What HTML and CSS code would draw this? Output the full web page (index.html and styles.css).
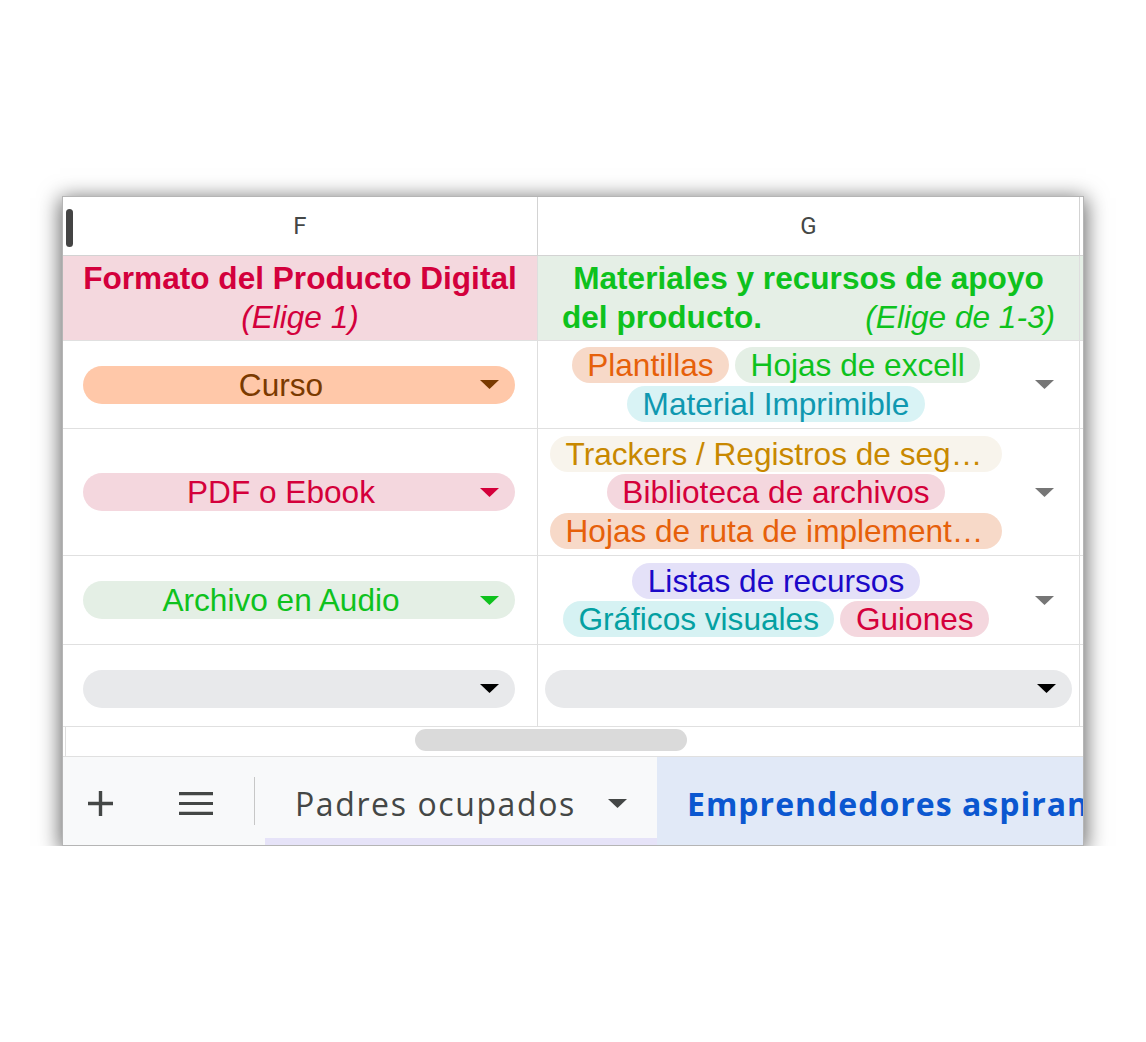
FILE: index.html
```html
<!DOCTYPE html>
<html lang="es">
	<head>
		<meta charset="utf-8"/>
		<title>Hoja de cálculo</title>
		<link rel="stylesheet" href="styles.css">
	</head>
	<body>
		<div class="page">
			<div class="sheet">
				<div class="grid">
					<!-- column letters -->
					<div class="head col-f"><span class="freeze"></span>F</div>
					<div class="head col-g">G</div>
					<div class="head col-h"></div>

					<!-- titles -->
					<div class="cell col-f title title-f">
						<div>Formato del Producto Digital</div>
						<div class="hint">(Elige 1)</div>
					</div>
					<div class="cell col-g title title-g">
						<div>Materiales y recursos de apoyo</div>
						<div class="title-line"><span>del producto.</span><span class="hint">(Elige de 1-3)</span></div>
					</div>
					<div class="cell col-h title-g"></div>

					<!-- row 1 -->
					<div class="cell col-f drop-cell">
						<div class="drop curso"><span class="drop-label">Curso</span><svg class="arrow" width="19" height="9" viewBox="0 0 19 9"><path d="M0 0H19L9.5 9Z"/></svg></div>
					</div>
					<div class="cell col-g chips-cell">
						<div class="chips">
							<span class="chip orange">Plantillas</span>
							<span class="chip green">Hojas de excell</span>
							<span class="chip cyan">Material Imprimible</span>
						</div>
						<svg class="arrow gray" width="19" height="9" viewBox="0 0 19 9"><path d="M0 0H19L9.5 9Z"/></svg>
					</div>
					<div class="cell col-h"></div>

					<!-- row 2 -->
					<div class="cell col-f drop-cell">
						<div class="drop pdf"><span class="drop-label">PDF o Ebook</span><svg class="arrow" width="19" height="9" viewBox="0 0 19 9"><path d="M0 0H19L9.5 9Z"/></svg></div>
					</div>
					<div class="cell col-g chips-cell">
						<div class="chips">
							<span class="chip gold">Trackers / Registros de seguimiento</span>
							<span class="chip red">Biblioteca de archivos</span>
							<span class="chip orange">Hojas de ruta de implementación</span>
						</div>
						<svg class="arrow gray" width="19" height="9" viewBox="0 0 19 9"><path d="M0 0H19L9.5 9Z"/></svg>
					</div>
					<div class="cell col-h"></div>

					<!-- row 3 -->
					<div class="cell col-f drop-cell">
						<div class="drop audio"><span class="drop-label">Archivo en Audio</span><svg class="arrow" width="19" height="9" viewBox="0 0 19 9"><path d="M0 0H19L9.5 9Z"/></svg></div>
					</div>
					<div class="cell col-g chips-cell">
						<div class="chips">
							<span class="chip violet">Listas de recursos</span>
							<span class="chip teal">Gráficos visuales</span>
							<span class="chip red">Guiones</span>
						</div>
						<svg class="arrow gray" width="19" height="9" viewBox="0 0 19 9"><path d="M0 0H19L9.5 9Z"/></svg>
					</div>
					<div class="cell col-h"></div>

					<!-- row 4, empty -->
					<div class="cell col-f drop-cell empty-row">
						<div class="drop empty"><span class="drop-label"></span><svg class="arrow" width="19" height="9" viewBox="0 0 19 9"><path d="M0 0H19L9.5 9Z"/></svg></div>
					</div>
					<div class="cell col-g drop-cell-wide empty-row">
						<div class="drop empty"><span class="drop-label"></span><svg class="arrow" width="19" height="9" viewBox="0 0 19 9"><path d="M0 0H19L9.5 9Z"/></svg></div>
					</div>
					<div class="cell col-h"></div>
				</div>

				<div class="scrollbar">
					<span class="scroll-edge"></span>
					<span class="thumb"></span>
				</div>

				<div class="tabs">
					<svg class="tab-icon plus" width="25" height="25" viewBox="0 0 25 25"><path d="M12.5 0V25M0 12.5H25" stroke="#444746" stroke-width="3.4"/></svg>
					<svg class="tab-icon menu" width="34" height="23" viewBox="0 0 34 23"><path d="M0 1.6H34M0 11.5H34M0 21.4H34" stroke="#444746" stroke-width="3.2"/></svg>
					<span class="tab-sep"></span>
					<div class="tab">
						<span>Padres ocupados</span>
						<svg class="tab-arrow" width="19" height="9" viewBox="0 0 19 9"><path d="M0 0H19L9.5 9Z"/></svg>
					</div>
					<div class="tab active">Emprendedores aspirantes</div>
				</div>
			</div>
		</div>
	</body>
</html>
```

FILE: styles.css
```css
body {
	margin: 0;
	background: #fff;
	font-family: "Liberation Sans", Arial, sans-serif;
}
.page {
	padding: 196px 0 0 62px;
}
.sheet {
	width: 1022px;
	box-sizing: border-box;
	border: 1px solid #b5b5b5;
	background: #fff;
	overflow: hidden;
	box-shadow: 0 4px 20px 2px rgba(0, 0, 0, 0.6);
}
.grid {
	display: grid;
	grid-template-columns: 475px 542px 3px;
	grid-template-rows: 59px 85px 88px 127px 89px 82px;
	font-size: 31.6px;
}
.head, .cell {
	box-sizing: border-box;
	border-right: 1px solid #dedede;
	border-bottom: 1px solid #e0e0e0;
}
.col-h {
	border-right: none;
}

/* column letters */
.head {
	position: relative;
	display: flex;
	align-items: center;
	justify-content: center;
	font-family: Roboto, "Liberation Sans", sans-serif;
	font-size: 24px;
	color: #444746;
	border-bottom-color: #d3d3d3;
	border-right-color: #d3d3d3;
}
.freeze {
	position: absolute;
	left: 3px;
	top: 12px;
	width: 7px;
	height: 38px;
	border-radius: 4px;
	background: #444;
}

/* title row */
.title {
	display: flex;
	flex-direction: column;
	justify-content: center;
	align-items: center;
	text-align: center;
	font-weight: bold;
	line-height: 39px;
}
.title .hint {
	font-weight: normal;
	font-style: italic;
}
.title-f {
	background: #f4d8de;
	color: #d3003c;
}
.title-g {
	background: #e5efe6;
	color: #0ec21d;
}
.title.title-g {
	align-items: stretch;
	padding: 0 24px;
}
.title-line {
	display: flex;
	justify-content: space-between;
}

/* single choice dropdowns */
.drop-cell {
	display: flex;
	align-items: center;
	padding: 0 22px 0 20px;
}
.drop-cell-wide {
	display: flex;
	align-items: center;
	padding: 0 7px 0 7px;
}
.empty-row {
	padding-top: 6px;
}
.drop {
	flex: 1;
	display: flex;
	align-items: center;
	height: 38px;
	border-radius: 19px;
	padding: 0 16px;
	line-height: 38px;
}
.drop-label {
	flex: 1;
	text-align: center;
	margin-right: 17px;
	white-space: nowrap;
}
.arrow {
	flex: none;
	fill: currentColor;
}
.curso {
	background: #ffc8a9;
	color: #7a3a00;
}
.pdf {
	background: #f4d7de;
	color: #d4003b;
}
.audio {
	background: #e4efe5;
	color: #0ec21d;
}
.empty {
	background: #e8e9eb;
	color: #000;
}

/* multi choice chips */
.chips-cell {
	display: flex;
	align-items: center;
	padding-left: 12px;
}
.chips {
	width: 452px;
	display: flex;
	flex-wrap: wrap;
	justify-content: center;
	gap: 2.5px 6px;
}
.chip {
	max-width: 100%;
	box-sizing: border-box;
	height: 36px;
	line-height: 36px;
	padding: 0 15.5px;
	border-radius: 18px;
	white-space: nowrap;
	overflow: hidden;
	text-overflow: ellipsis;
}
.chips-cell .arrow {
	margin-left: 33px;
}
.arrow.gray {
	fill: #767676;
}
.orange {
	background: #f7d9c8;
	color: #e6600a;
}
.green {
	background: #e4efe5;
	color: #0ec21d;
}
.cyan {
	background: #d9f3f5;
	color: #0f98b0;
}
.gold {
	background: #f8f4ec;
	color: #c88800;
}
.red {
	background: #f4d7de;
	color: #d4003b;
}
.violet {
	background: #e4e1f8;
	color: #1b08c8;
}
.teal {
	background: #d6f2f3;
	color: #04a0a2;
}

/* horizontal scrollbar */
.scrollbar {
	display: flex;
	align-items: flex-start;
	height: 30px;
	box-sizing: border-box;
	border-bottom: 1px solid #e0e0e0;
}
.scroll-edge {
	width: 1px;
	height: 29px;
	margin-left: 2px;
	background: #dedede;
}
.thumb {
	width: 272px;
	height: 22px;
	margin: 2px 0 0 349px;
	border-radius: 11px;
	background: #dadada;
}

/* sheet tabs */
.tabs {
	display: flex;
	align-items: center;
	height: 88px;
	background: #f8f9fa;
	font-family: "Open Sans", sans-serif;
	font-size: 32px;
	white-space: nowrap;
}
.tab-icon {
	flex: none;
	margin-top: 5px;
}
.plus {
	margin-left: 25px;
}
.menu {
	margin-left: 66px;
}
.tab-sep {
	width: 1px;
	height: 48px;
	margin-left: 41px;
	background: #c7c7c7;
}
.tab {
	box-sizing: border-box;
	height: 88px;
	display: flex;
	align-items: center;
	padding: 4px 30px 0;
	letter-spacing: 1.6px;
}
.tab:not(.active) {
	width: 392px;
	margin-left: 10px;
	color: #444746;
	font-weight: 500;
	box-shadow: inset 0 -7px 0 #e6e3f8;
}
.tab-arrow {
	margin-left: auto;
	fill: #444746;
}
.tab.active {
	flex: 1;
	overflow: hidden;
	background: #e1e9f7;
	color: #0b57d0;
	font-weight: bold;
	letter-spacing: 1px;
}
```
